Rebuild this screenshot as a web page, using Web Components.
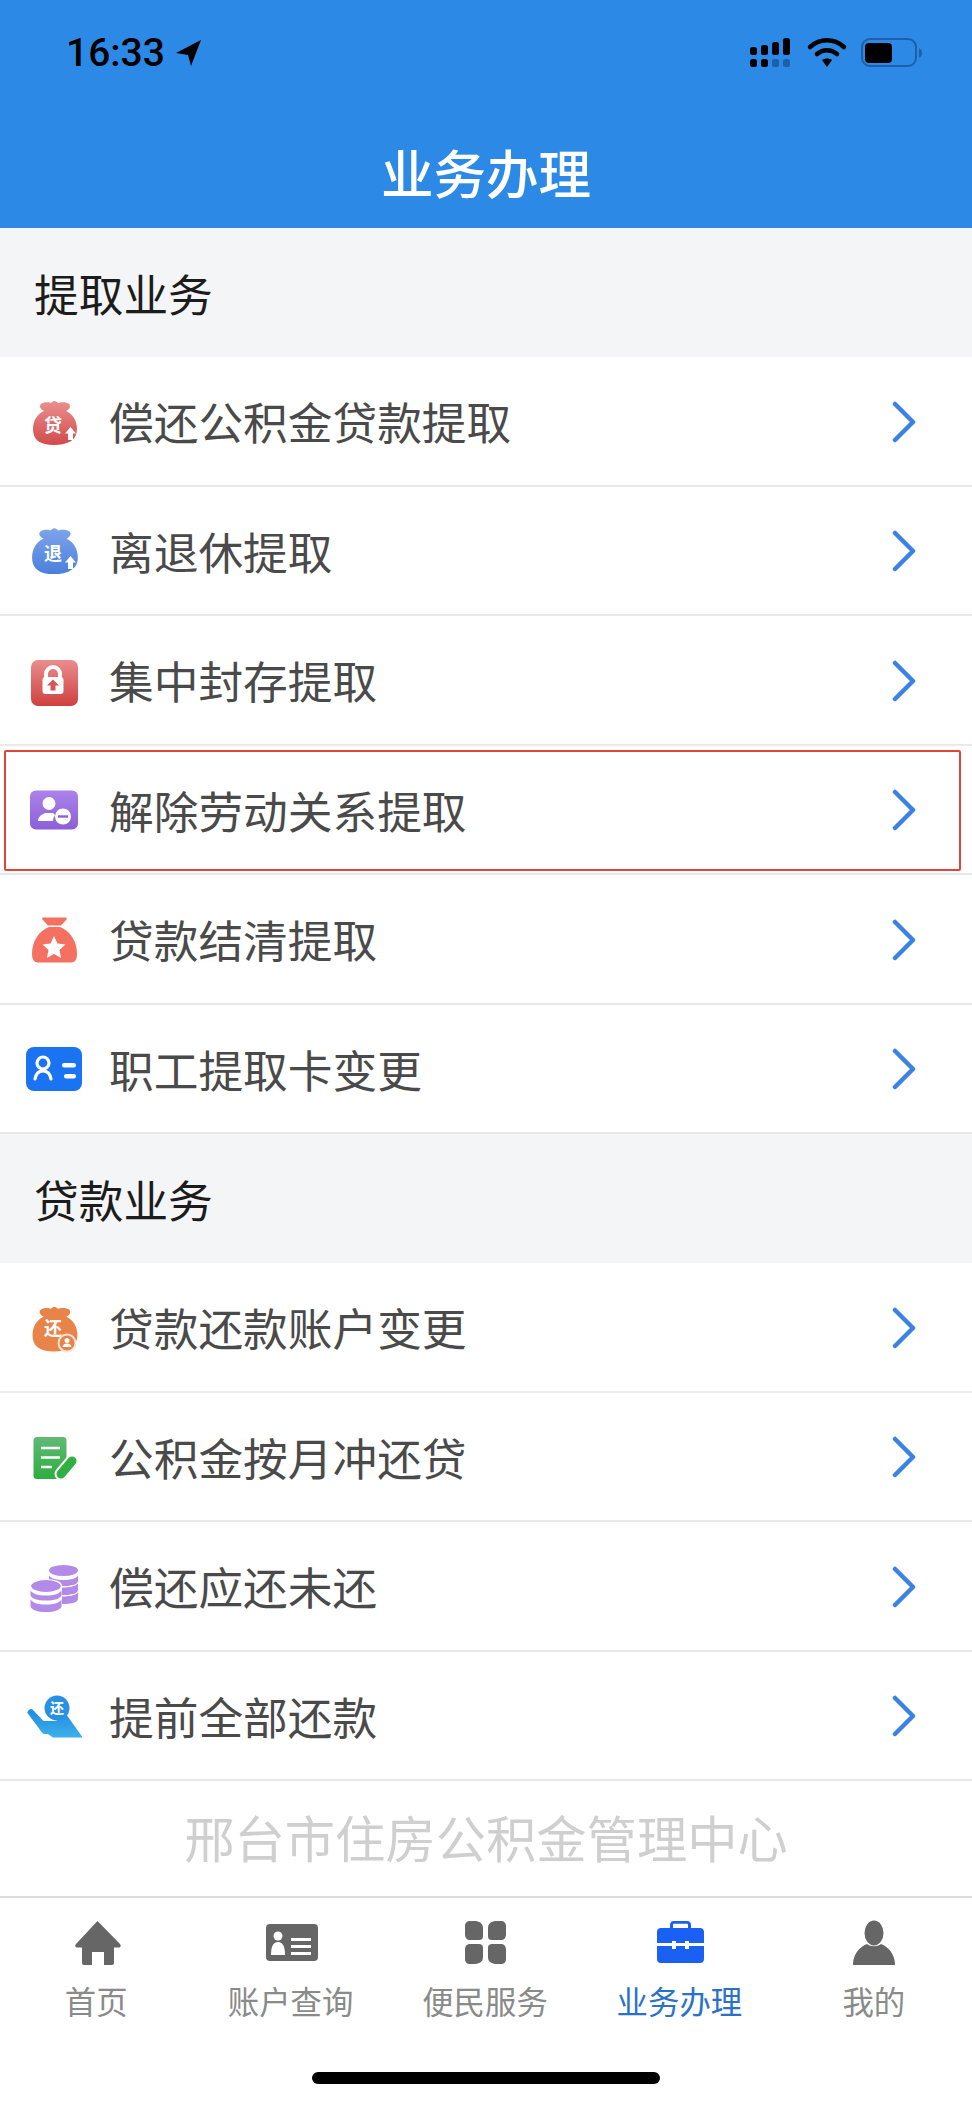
<!DOCTYPE html>
<html lang="zh-CN">
<head>
<meta charset="utf-8">
<title>业务办理</title>
<style>
  html, body { margin: 0; padding: 0; }
  body { font-family: "Noto Sans CJK SC", "Noto Sans", sans-serif; background: #fff; }
</style>
</head>
<body>
<app-shell>
  <status-bar slot="top"></status-bar>
  <section-title>提取业务</section-title>
  <list-row icon="loan">偿还公积金贷款提取</list-row>
  <list-row icon="retire">离退休提取</list-row>
  <list-row icon="lock">集中封存提取</list-row>
  <list-row icon="leave" marked>解除劳动关系提取</list-row>
  <list-row icon="star">贷款结清提取</list-row>
  <list-row icon="card">职工提取卡变更</list-row>
  <section-title>贷款业务</section-title>
  <list-row icon="repay">贷款还款账户变更</list-row>
  <list-row icon="doc">公积金按月冲还贷</list-row>
  <list-row icon="coins">偿还应还未还</list-row>
  <list-row icon="hand">提前全部还款</list-row>
  <page-footer>邢台市住房公积金管理中心</page-footer>
  <tab-bar slot="bottom">
    <tab-item icon="home">首页</tab-item>
    <tab-item icon="account">账户查询</tab-item>
    <tab-item icon="grid">便民服务</tab-item>
    <tab-item icon="case" active>业务办理</tab-item>
    <tab-item icon="me">我的</tab-item>
  </tab-bar>
</app-shell>

<script>
  const BAG = "M28 8c2 0 3 1 4 2 3-1 9-1 11 1 2 2 1 5-3 7 7 3 11 10 11 18 0 11-9 16-23 16S7 47 7 36c0-8 4-15 11-18-4-2-5-5-3-7 2-2 8-2 10-1 1-1 2-2 3-2z"
  const grad = (id, top, bottom) =>
    `<defs><linearGradient id="${id}" x1="0" y1="0" x2="0" y2="1"><stop offset="0" stop-color="${top}"/><stop offset="1" stop-color="${bottom}"/></linearGradient></defs>`
  const glyph = (x, y, size, text) =>
    `<text x="${x}" y="${y}" font-size="${size}" font-weight="700" fill="#fff" text-anchor="middle" font-family="Noto Sans CJK SC, sans-serif">${text}</text>`
  const arrow = `<path d="M44.500 34l5.500 6.500h-3v6.500h-5v-6.500h-3z" fill="#fff"/>`

  // row icons, drawn in a 56x56 box
  const ROW_ICONS = {
    loan: grad("g", "#ea8f8f", "#d24b4b") + `<path d="${BAG}" fill="url(#g)"/>` + glyph(27, 39, 18, "贷") + arrow,
    retire: grad("g", "#7ea4ea", "#4a80dc") + `<path d="${BAG}" transform="translate(-1.200 -2) scale(1.040)" fill="url(#g)"/>` + glyph(27, 38, 18, "退") + arrow,
    lock: grad("g", "#ea8d8d", "#cf4040") + `<rect x="5" y="8" width="47" height="46" rx="7" fill="url(#g)"/>
      <path d="M20 26v-4a7 7 0 0 1 14 0v4" fill="none" stroke="#fff" stroke-width="4"/>
      <rect x="16.500" y="25" width="21" height="17" rx="3" fill="#fff"/>
      <path d="M27 27.500l6 6h-3.500v5h-5v-5H21z" fill="#d9555a"/>`,
    leave: grad("g", "#ac82ea", "#8b60d8") + `<rect x="4" y="9.500" width="48" height="39" rx="6" fill="url(#g)"/>
      <circle cx="23" cy="22.500" r="6.500" fill="#fff"/>
      <path d="M12 40c0-4 3-6 7-8h8l2 2a10 10 0 0 0-2 6z" fill="#fff"/>
      <circle cx="37" cy="35.500" r="8" fill="#fff"/>
      <rect x="32" y="34.300" width="10" height="2.400" fill="#8b60d8"/>`,
    star: `<path d="M17 6.500h23c1 0 1 1 .5 2L35 14.500h-13L16.500 8.500c-.5-1-.5-2 .5-2z" fill="#f47060"/>
      <path d="M23 16h11c10 4 17 14 17 27 0 5-2 8.500-6 8.500H12c-4 0-6-3.500-6-8.500 0-13 7-23 17-27z" fill="#f47060"/>
      <path d="M28 25l3.500 7.500 8 1-6 5.500 1.600 8L28 43l-7.100 4 1.600-8-6-5.500 8-1z" fill="#fff"/>`,
    card: `<rect x="0" y="7" width="56" height="44" rx="8" fill="#1a73f0"/>
      <circle cx="17" cy="23" r="6" fill="none" stroke="#fff" stroke-width="3.200"/>
      <path d="M9 39c1-6 4-8 8-8s7 2 8 8" fill="none" stroke="#fff" stroke-width="3.200" stroke-linecap="round"/>
      <rect x="36" y="23" width="14" height="4.500" rx="2.200" fill="#fff"/>
      <rect x="38" y="34" width="12" height="4.500" rx="2.200" fill="#fff"/>`,
    repay: `<path d="${BAG}" transform="translate(-.600 -.500) scale(1.020)" fill="#e8834a"/>` + glyph(27, 36, 18, "还") +
      `<circle cx="41" cy="44" r="8.500" fill="#e8834a" stroke="#fbe3d6" stroke-width="2"/>
      <circle cx="41" cy="41.500" r="2.500" fill="#fff"/><path d="M36.500 48c.5-2.500 2-3.500 4.500-3.500s4 1 4.500 3.500z" fill="#fff"/>`,
    doc: grad("g", "#62b978", "#2cae3e") + `<rect x="7.500" y="9" width="33" height="42" rx="3.500" fill="url(#g)"/>
      <path d="M15 20h19M15 29.500h19M15 39h11" stroke="#fff" stroke-width="2.400" fill="none"/>
      <path d="M46 33L35 46" stroke="#fff" stroke-width="13" stroke-linecap="round"/>
      <path d="M46 33L35 46" stroke="#2fb040" stroke-width="9" stroke-linecap="round"/>`,
    coins: `<g fill="#b48ae8">
        <ellipse cx="37.500" cy="12.500" rx="14.500" ry="5.500"/>
        <path d="M23 17.500c2 3 7 4.500 14.500 4.500s12.500-1.500 14.500-4.500v6c-1 3-6 4.500-14.500 4.500-8 0-13.500-1.500-14.500-4.500zM36 29.500c7 0 13-1 16-4v7c-1 3-6 4.500-14.500 4.500H36zM36 38.500c7 0 13-1 16-4v7c-1 3-6 4.500-16 4.500z"/>
        <ellipse cx="20" cy="28" rx="15.500" ry="6.500" stroke="#fff" stroke-width="1.200"/>
        <path d="M4.500 32.500c2 3 7 5 15.500 5s13.500-2 15.500-5v5c-1 3-7 5-15.500 5s-14.500-2-15.500-5zM4.500 41.500c2 3 7 5 15.500 5s13.500-2 15.500-5v7c-1 3.500-7 5.500-15.500 5.500s-14.500-2-15.500-5.500z"/>
      </g>`,
    hand: grad("g", "#1f8ae0", "#3db0ea") + `<path d="M1.500 26c-.5-1 .5-2 1.500-3 1-1 2.500-1.500 3.500-.500l11 11.500h12c3 0 3-3 1.500-5l9-2 16 22.500c.500 .500 0 1-.5 1H27l-5-3.500h-3c-1 0-2-.500-3-1.500z" fill="url(#g)"/>
      <circle cx="31" cy="21" r="12.500" fill="#2a90e2"/>` + glyph(31, 26, 14, "还")
  }

  // tab icons, drawn in a 56x48 box
  const TAB_ICONS = {
    home: `<path d="M28.500 2L51 25c1.500 2 .5 3.500-1.500 3.500H45V44c0 1.200-.8 2-2 2h-8V33H23v13h-8c-1.200 0-2-.8-2-2V28.500H8.500c-2 0-3-1.500-1.500-3.500z"/>`,
    account: `<rect x="2" y="5" width="52" height="37" rx="4"/>
      <circle cx="14" cy="17" r="4.500" fill="#fff"/><path d="M7 36c0-8 2-13 7-13s7 5 7 13z" fill="#fff"/>
      <path d="M27 19h20v3H27zM27 26h20v3H27zM27 33h20v3H27z" fill="#fff"/>`,
    grid: `<path d="M12 2h4c3.500 0 9 1 9 7v8c0 3-1.500 4-4 4h-9c-3 0-5-2-5-6V7c0-3 2-5 5-5zM43 2h-4c-3.500 0-9 1-9 7v8c0 3 1.500 4 4 4h9c3 0 5-2 5-6V7c0-3-2-5-5-5zM12 45h4c3.500 0 9-1 9-7v-9c0-3-1.500-4-4-4h-9c-3 0-5 2-5 6v9c0 3 2 5 5 5zM43 45h-4c-3.500 0-9-1-9-7v-9c0-3 1.500-4 4-4h9c3 0 5 2 5 6v9c0 3-2 5-5 5z"/>`,
    case: `<path d="M18 10V6c0-2.500 1.500-4 4-4h13c2.500 0 4 1.500 4 4v4h-3V6c0-.8-.4-1.200-1-1.200H22c-.6 0-1 .4-1 1.200v4z"/>
      <path d="M9 9h39c2.500 0 4 1.500 4 4v11H37v-2h-4v2H24v-2h-4v2H5V13c0-2.500 1.500-4 4-4zM5 27h15v3h4v-3h9v3h4v-3h15v13c0 2.500-1.500 4-4 4H9c-2.500 0-4-1.500-4-4z"/>`,
    me: `<ellipse cx="27" cy="14" rx="9.500" ry="12.500"/>
      <path d="M20 25c-8 3-14 11-14 20.500 0 .5.200.5.500.5h41c.3 0 .5 0 .5-.5C48 36 42 28 34 25c-4 3-10 3-14 0z"/>`
  }

  class AppShell extends HTMLElement {
    constructor() {
      super()
      this.root = this.attachShadow({ mode: "open" })
      this.root.innerHTML = `
      <style>
        :host { display: flex; flex-direction: column; width: 972px; height: 2103px; background: #fff; overflow: hidden; }
        header { background: #2c89e5; height: 228px; box-sizing: border-box; padding-top: 38px; flex: none; }
        h1 { margin: 73px 0 0; height: 60px; line-height: 60px; text-align: center; color: #fff; font-size: 52.500px; font-weight: 500; }
        main { flex: 1; display: flex; flex-direction: column; min-height: 0; }
      </style>
      <header><slot name="top"></slot><h1>业务办理</h1></header>
      <main><slot></slot></main>
      <slot name="bottom"></slot>`
    }
  }

  class StatusBar extends HTMLElement {
    constructor() {
      super()
      this.root = this.attachShadow({ mode: "open" })
      this.root.innerHTML = `
      <style>
        :host { display: flex; align-items: center; justify-content: space-between; height: 30px; padding: 0 50px 0 66px; }
        .left { display: flex; align-items: center; gap: 11px; }
        .time { font: 500 39px/30px Roboto, "Liberation Sans", sans-serif; color: #000; }
        svg { display: block; }
      </style>
      <div class="left">
        <span class="time">16:33</span>
        <svg width="25" height="26" viewBox="0 0 25 26"><path d="M25 0L15 26l-3-11L0 13z" fill="#000"/></svg>
      </div>
      <svg width="172" height="30" viewBox="0 0 172 30">
        <g fill="#000">
          <rect x="0" y="9" width="7" height="8" rx="2.500"/><rect x="11" y="7" width="7" height="10" rx="2.500"/>
          <rect x="22" y="4" width="7" height="13" rx="2.500"/><rect x="33" y="0" width="7" height="17" rx="2.500"/>
          <rect x="0" y="21" width="7" height="8" rx="2.500"/><rect x="11" y="21" width="7" height="8" rx="2.500"/>
        </g>
        <g fill="#1d5fa8"><rect x="22" y="21" width="7" height="8" rx="2.500"/><rect x="33" y="21" width="7" height="8" rx="2.500"/></g>
        <g fill="none" stroke="#000" stroke-width="4.500" stroke-linecap="round">
          <path d="M60 9c10-9 24-9 34 0"/><path d="M67 16c6-5 14-5 20 0"/>
        </g>
        <path d="M72 22c3-2 7-2 10 0l-5 7z" fill="#000"/>
        <rect x="112" y="1" width="54" height="27" rx="8" fill="none" stroke="#1d5fa8" stroke-width="2"/>
        <rect x="115" y="5" width="27" height="20" rx="4" fill="#000"/>
        <path d="M169 10c2 1 3 3 3 5s-1 4-3 5z" fill="#1d5fa8"/>
      </svg>`
    }
  }

  class SectionTitle extends HTMLElement {
    constructor() {
      super()
      this.root = this.attachShadow({ mode: "open" })
      this.root.innerHTML = `
      <style>
        :host { display: flex; align-items: center; flex: none; height: 129px; padding-left: 34px; background: #f4f5f6; color: #1c1c1c; font-size: 44.700px; }
      </style>
      <slot></slot>`
    }
  }

  class ListRow extends HTMLElement {
    constructor() {
      super()
      this.root = this.attachShadow({ mode: "open" })
      this.root.innerHTML = `
      <style>
        :host { display: flex; align-items: center; position: relative; flex: none; box-sizing: border-box; height: 129.500px; padding: 0 56px 0 26px; border-bottom: 2px solid #e9e9e9; background: #fff; color: #4a4a4a; font-size: 44.700px; }
        :host([marked])::after { content: ""; position: absolute; left: 4px; right: 11px; top: 4px; bottom: 2px; border: 2px solid #e2443a; border-radius: 2px; }
        .icon { width: 56px; height: 56px; flex: none; display: block; margin-right: 27px; }
        .text { flex: 1; }
        .more { width: 24px; height: 42px; flex: none; display: block; margin-top: 2px; }
      </style>
      <svg class="icon" viewBox="0 0 56 56">${ROW_ICONS[this.getAttribute("icon")]}</svg>
      <span class="text"><slot></slot></span>
      <svg class="more" viewBox="0 0 24 42"><path d="M3 3l18 18L3 39" fill="none" stroke="#3a82e4" stroke-width="4.500" stroke-linecap="round" stroke-linejoin="round"/></svg>`
    }
  }

  class PageFooter extends HTMLElement {
    constructor() {
      super()
      this.root = this.attachShadow({ mode: "open" })
      this.root.innerHTML = `
      <style>
        :host { display: flex; flex: 1; align-items: center; justify-content: center; padding-bottom: 6px; color: #cfcfcf; font-size: 50.300px; }
      </style>
      <slot></slot>`
    }
  }

  class TabBar extends HTMLElement {
    constructor() {
      super()
      this.root = this.attachShadow({ mode: "open" })
      this.root.innerHTML = `
      <style>
        :host { display: flex; flex-direction: column; flex: none; box-sizing: border-box; height: 207px; border-top: 2px solid #dcdcdc; background: #fff; }
        .tabs { display: grid; grid-template-columns: repeat(5, 1fr); padding-top: 21px; }
        .home { width: 348px; height: 12px; border-radius: 6px; background: #000; margin: 51px auto 0; }
      </style>
      <div class="tabs"><slot></slot></div>
      <div class="home"></div>`
    }
  }

  class TabItem extends HTMLElement {
    constructor() {
      super()
      this.root = this.attachShadow({ mode: "open" })
      const active = this.hasAttribute("active")
      this.root.innerHTML = `
      <style>
        :host { display: flex; flex-direction: column; align-items: center; color: ${active ? "#2a72c8" : "#8a8a8a"}; font-size: 31.400px; }
        svg { width: 56px; height: 48px; display: block; fill: ${active ? "#1a60f2" : "#666"}; margin-bottom: 14px; }
        span { line-height: 40px; margin-left: -2px; }
      </style>
      <svg viewBox="0 0 56 48">${TAB_ICONS[this.getAttribute("icon")]}</svg>
      <span><slot></slot></span>`
    }
  }

  customElements.define("app-shell", AppShell)
  customElements.define("status-bar", StatusBar)
  customElements.define("section-title", SectionTitle)
  customElements.define("list-row", ListRow)
  customElements.define("page-footer", PageFooter)
  customElements.define("tab-bar", TabBar)
  customElements.define("tab-item", TabItem)
</script>
</body>
</html>
